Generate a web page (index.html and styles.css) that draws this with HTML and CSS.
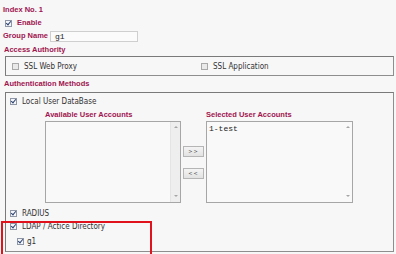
FILE: index.html
```html
<!DOCTYPE html>
<html lang="en">
<head>
    <meta charset="UTF-8">
    <title>Group Settings</title>
    <link rel="stylesheet" href="styles.css">
</head>
<body>
    <div class="page">
        <div class="title">Index No. 1</div>
        <div class="enable"><span class="cb on"></span><span class="bold">Enable</span></div>
        <div class="group">
            <span class="bold">Group Name</span>
            <span class="field">g1</span>
        </div>

        <div class="heading access-head">Access Authority</div>
        <div class="box access">
            <div class="opt"><span class="cb"></span>SSL Web Proxy</div>
            <div class="opt"><span class="cb"></span>SSL Application</div>
        </div>

        <div class="heading auth-head">Authentication Methods</div>
        <div class="box auth">
            <div class="opt"><span class="cb on"></span>Local User DataBase</div>
            <div class="accounts">
                <div class="col avail">
                    <div class="heading">Available User Accounts</div>
                    <div class="list">
                        <div class="items"></div>
                        <div class="scroll"><span class="up"></span><span class="down"></span></div>
                    </div>
                </div>
                <div class="moves">
                    <button>&gt;&gt;</button>
                    <button>&lt;&lt;</button>
                </div>
                <div class="col selected">
                    <div class="heading">Selected User Accounts</div>
                    <div class="list">
                        <div class="items"><div class="item">1-test</div></div>
                        <div class="scroll plain"><span class="up"></span><span class="down"></span></div>
                    </div>
                </div>
            </div>
            <div class="opt radius"><span class="cb on"></span>RADIUS</div>
            <div class="opt ldap"><span class="cb on"></span>LDAP / Actice Directory</div>
            <div class="opt sub"><span class="cb on"></span>g1</div>
        </div>

        <div class="mark"></div>
    </div>
</body>
</html>
```

FILE: styles.css
```css
html, body {
    margin: 0;
    height: 254px;
    overflow: hidden;
}
body {
    background: #f7f7f7;
    font-family: "DejaVu Sans Condensed", "DejaVu Sans", sans-serif;
    font-stretch: condensed;
    font-size: 8px;
    color: #333;
}
.page {
    position: relative;
    box-sizing: border-box;
    height: 254px;
    padding: 4px 3px 0 3px;
    overflow: hidden;
}
.title, .heading, .bold {
    font-family: "Liberation Sans", Arial, sans-serif;
    font-stretch: normal;
    font-weight: bold;
    font-size: 7.5px;
    line-height: 12px;
    color: #a0144f;
}
.title {
    height: 12px;
}
.enable {
    display: flex;
    align-items: center;
    gap: 5px;
    height: 12px;
    margin-top: 1px;
    padding-left: 2px;
}
.group {
    display: grid;
    grid-template-columns: 47px 88px;
    align-items: center;
    height: 11px;
    margin-top: 1px;
}
.field {
    box-sizing: border-box;
    height: 11px;
    padding-left: 4px;
    border: 1px solid #cfcfcf;
    background: #fbfbfb;
    font-family: "Liberation Mono", monospace;
    font-size: 8px;
    line-height: 9px;
    color: #222;
}
.heading {
    height: 12px;
}
.access-head {
    margin-top: 3px;
    padding-left: 1px;
}
.auth-head {
    margin-top: 2px;
    padding-left: 1px;
}
.box {
    box-sizing: border-box;
    width: 389px;
    margin-left: 2px;
    border: 1px solid #8e8e8e;
    border-top-color: #7a7a7a;
    border-left-color: #7a7a7a;
}
.access {
    display: grid;
    grid-template-columns: 189px 1fr;
    align-items: center;
    height: 20px;
    padding-left: 6px;
}
.auth {
    height: 160px;
    margin-top: 2px;
    padding: 2px 0 0 4px;
}
.opt {
    display: flex;
    align-items: center;
    gap: 5px;
    height: 12px;
    white-space: nowrap;
}
.cb {
    position: relative;
    box-sizing: border-box;
    width: 7px;
    height: 7px;
    flex: none;
    border: 1px solid #a9a9a9;
    background: #e9e9e9;
}
.cb.on {
    border-color: #8f97a6;
    background: #f4f6fa;
}
.cb.on::after {
    content: "";
    position: absolute;
    left: 1px;
    top: -1px;
    width: 2px;
    height: 4px;
    border: solid #2c4270;
    border-width: 0 1px 1px 0;
    transform: rotate(40deg);
}
.accounts {
    display: flex;
    margin-top: 2px;
    margin-left: 35px;
}
.avail {
    width: 136px;
}
.selected {
    width: 147px;
}
.list {
    box-sizing: border-box;
    display: flex;
    height: 82px;
    border: 1px solid #a6a6a6;
    background: #f9f9f9;
}
.items {
    flex: 1;
    padding: 2px 2px;
}
.item {
    font-family: "Liberation Mono", monospace;
    font-size: 8px;
    line-height: 9px;
    color: #222;
}
.scroll {
    display: flex;
    flex-direction: column;
    justify-content: space-between;
    align-items: center;
    width: 9px;
    padding: 4px 0 5px;
    border-left: 1px solid #e4e4e4;
    background: #eeeeee;
}
.scroll.plain {
    border-left-color: transparent;
    background: transparent;
}
.up, .down {
    width: 0;
    height: 0;
    border-left: 2px solid transparent;
    border-right: 2px solid transparent;
}
.up {
    border-bottom: 2px solid #a5a5a5;
}
.down {
    border-top: 2px solid #a5a5a5;
}
.moves {
    display: flex;
    flex-direction: column;
    gap: 11px;
    width: 21px;
    margin: 0 2px;
    padding-top: 37px;
}
.moves button {
    box-sizing: border-box;
    width: 21px;
    height: 11px;
    padding: 0;
    border: 1px solid #b5b5b5;
    background: linear-gradient(#f4f4f4, #e2e2e2);
    font-family: "DejaVu Sans", sans-serif;
    font-size: 5px;
    letter-spacing: 1px;
    line-height: 9px;
    color: #555;
}
.radius {
    margin-top: 4px;
}
.ldap {
    margin-top: 1px;
}
.sub {
    margin-top: 3px;
    padding-left: 7px;
    gap: 3px;
}
.mark {
    position: absolute;
    left: 1px;
    top: 221px;
    box-sizing: border-box;
    width: 151px;
    height: 60px;
    border: 2px solid #e0131d;
}
```
